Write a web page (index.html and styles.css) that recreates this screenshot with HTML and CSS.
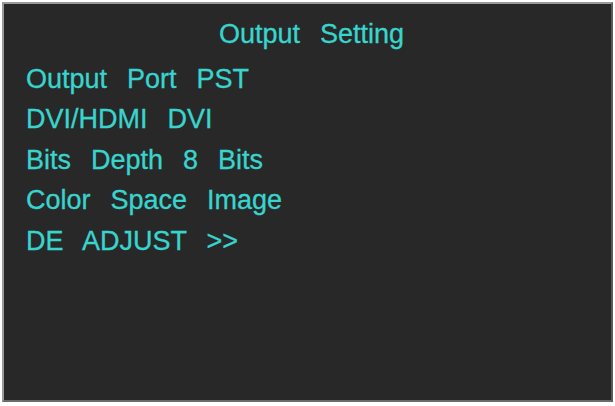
FILE: index.html
```html
<!DOCTYPE html>
<html lang="en">
<head>
  <meta charset="UTF-8">
  <title>Output Setting</title>
  <link rel="stylesheet" href="styles.css">
</head>
<body>
  <div class="screen">
    <div class="title">Output Setting</div>
    <div class="item">Output Port PST</div>
    <div class="item">DVI/HDMI DVI</div>
    <div class="item">Bits Depth 8 Bits</div>
    <div class="item">Color Space Image</div>
    <div class="item">DE ADJUST &gt;&gt;</div>
  </div>
</body>
</html>
```

FILE: styles.css
```css
body {
  margin: 0;
  padding: 0;
  background-color: #fff;
  font-family: "Liberation Sans", Arial, sans-serif;
}

.screen {
  box-sizing: border-box;
  width: 611px;
  height: 400px;
  margin: 2px 0 0 2px;
  border: 2px solid #9a9a9a;
  border-right-color: #5a5a5a;
  border-bottom-color: #6a6a6a;
  background-color: #282828;
  padding: 10px 0 0 22px;
  color: #38d5cf;
  font-size: 27px;
  line-height: 40.5px;
  word-spacing: 12.5px;
  -webkit-text-stroke: 0.3px #38d5cf;
}

.title {
  text-align: center;
  margin: 0 0 4px -14px;
}
```
